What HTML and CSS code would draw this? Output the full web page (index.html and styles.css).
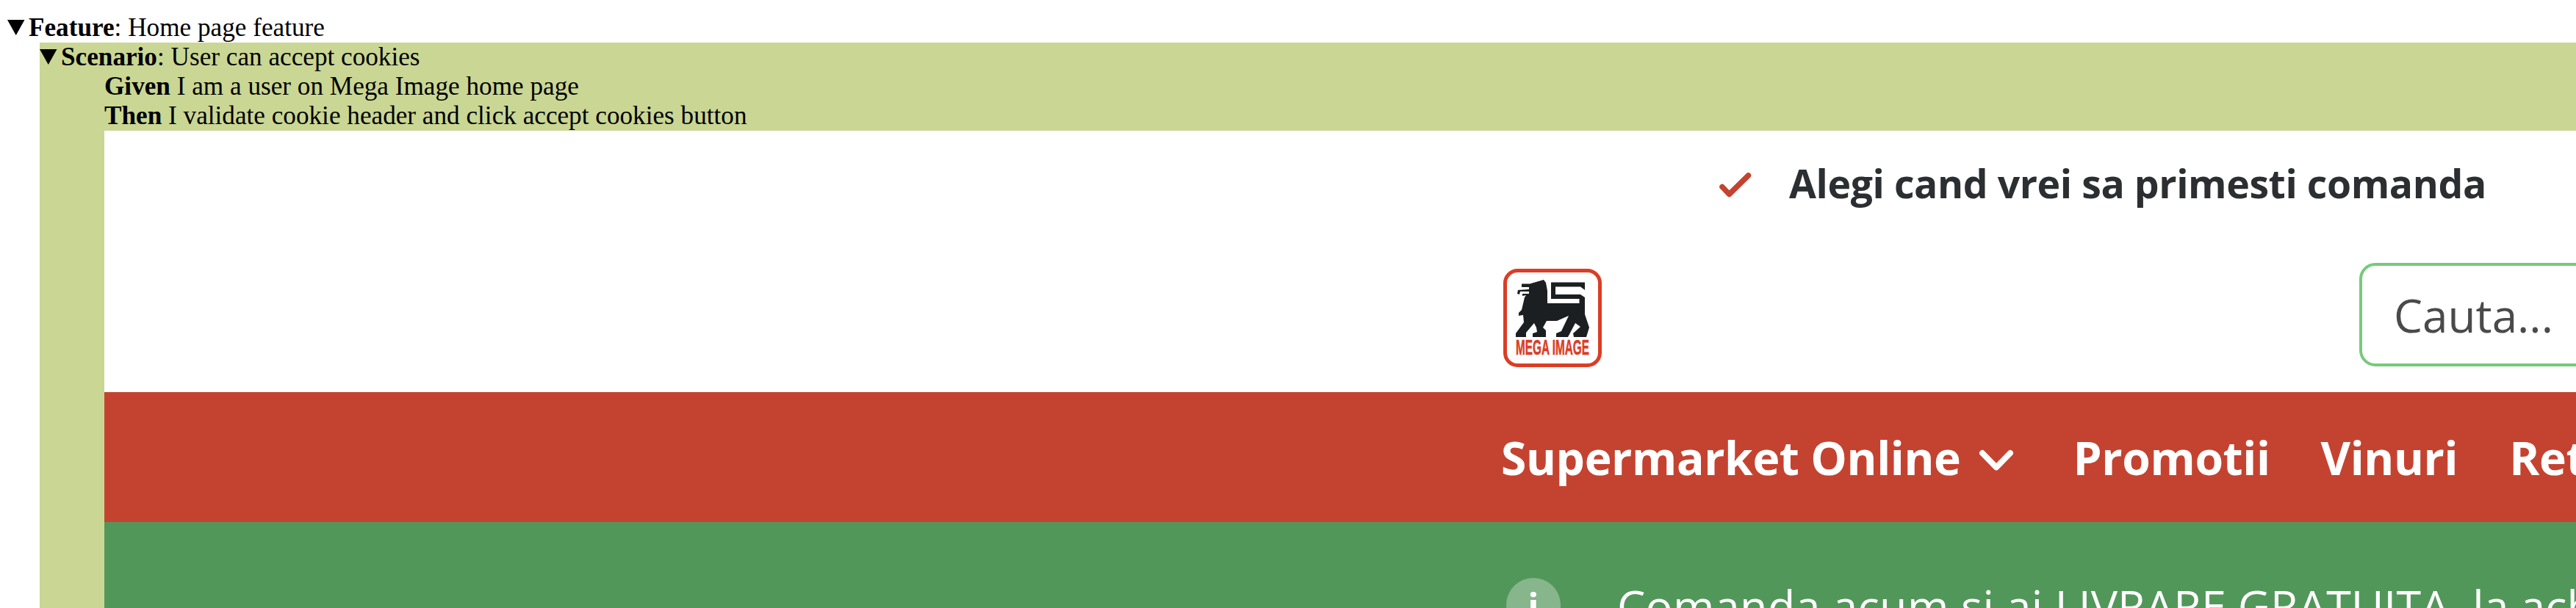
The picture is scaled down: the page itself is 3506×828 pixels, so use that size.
FILE: index.html
```html
<!DOCTYPE html>
<html lang="ro">
<head>
<meta charset="utf-8">
<title>Home page feature</title>
<link rel="stylesheet" href="styles.css">
</head>
<body>
<main class="report">
  <div class="summary feature"><svg class="marker" viewBox="0 0 24 22"><path d="M0 0H23.500L11.750 21Z"/></svg><span class="line"><b>Feature</b>: Home page feature</span></div>
  <section class="scenario">
    <div class="summary"><svg class="marker" viewBox="0 0 24 22"><path d="M0 0H23.500L11.750 21Z"/></svg><span class="line"><b>Scenario</b>: User can accept cookies</span></div>
    <div class="steps">
      <div class="step"><span class="line"><b>Given</b> I am a user on Mega Image home page</span></div>
      <div class="step"><span class="line"><b>Then</b> I validate cookie header and click accept cookies button</span></div>
      <div class="shot">
        <div class="usp">
          <svg class="check" viewBox="0 0 44 34"><path d="M4 19.500L13.500 29.500L39.500 4"/></svg>
          <span class="usp-text">Alegi cand vrei sa primesti comanda</span>
        </div>
        <div class="header">
          <svg class="logo" viewBox="0 0 134 134">
            <rect class="frame" x="2.500" y="2.500" width="129" height="129" rx="17"/>
            <path class="lion" d="M25 20.500H36L55 15L58 19L60 30V47H103.500V41H65V18.500H111V29L105 24.500H71V35H105L111 39V62L117 80L113 93H96L95 88L105 79L98 74L88 93H72V88L79 85L89 64L73 71H59L54 80L58 84V93H40V88L46 86L45 80L42 74L31 87V93H17V88L28 73L27 63L21 64V60L25 56L29 39L31 36L26 37V34L35 34V31L23 31L22 35L19 34L20 29L35 28V25H25Z"/>
            <text class="logo-text" x="17" y="117" textLength="100" lengthAdjust="spacingAndGlyphs">MEGA IMAGE</text>
          </svg>
          <div class="search">Cauta...</div>
        </div>
        <nav class="nav">
          <span class="nav-main">Supermarket Online</span>
          <svg class="chevron" viewBox="0 0 46 32"><path d="M4 5L23 24.500L42 5"/></svg>
          <span class="nav-promo">Promotii</span>
          <span class="nav-wine">Vinuri</span>
          <span class="nav-ret">Retete</span>
        </nav>
        <div class="notice">
          <span class="info">i</span>
          <span class="notice-text"><span class="lead">Comanda acum si ai </span>LIVRARE GRATUITA, la achizitii</span>
        </div>
      </div>
    </div>
  </section>
</main>
</body>
</html>
```
FILE: styles.css
```css
* { box-sizing: border-box; }
html, body { margin: 0; height: 828px; overflow: hidden; background: #fff; }
.report {
  height: 828px;
  padding-top: 18px;
  overflow: hidden;
  font: 35.2px/40px "Liberation Serif", "Times New Roman", serif;
  color: #000;
  white-space: nowrap;
}
.summary { display: flex; height: 40px; }
.feature { padding-left: 10px; }
.marker { width: 24px; height: 22px; margin: 9px 5px 0 0; flex: none; }
.scenario { margin-left: 54px; height: 770px; background: #cad694; }
.steps { margin-left: 88px; }
.step { height: 40px; }
.shot {
  height: 650px;
  overflow: hidden;
  background: #fff;
  font-family: "Open Sans", sans-serif;
}
.usp { display: flex; align-items: flex-start; height: 180px; padding-left: 2198px; }
.check { width: 44px; height: 34px; margin-top: 57px; flex: none; }
.check path { fill: none; stroke: #c44330; stroke-width: 7.5; stroke-linecap: round; stroke-linejoin: round; }
.usp-text { margin: 42px 0 0 51px; font-size: 53.5px; line-height: 60px; font-weight: 700; letter-spacing: -0.4px; color: #2b2f32; }
.header { display: flex; height: 176px; padding-left: 1904px; }
.logo { width: 134px; height: 134px; margin-top: 8px; flex: none; }
.frame { fill: #fff; stroke: #db3d26; stroke-width: 5; }
.lion { fill: #1c1f22; }
.logo-text { font: 700 30px "Liberation Sans", sans-serif; fill: #db3d26; stroke: #db3d26; stroke-width: 0.6; }
.search {
  width: 900px;
  height: 141px;
  margin-left: 1031px;
  padding: 27px 0 0 43px;
  flex: none;
  border: 4px solid #76ca7b;
  border-radius: 22px;
  font-size: 62px;
  line-height: 80px;
  color: #4a4a4a;
}
.nav {
  display: flex;
  height: 177px;
  padding: 49px 0 0 1901px;
  background: #c44330;
  color: #fff;
  font-size: 62.4px;
  line-height: 80px;
  font-weight: 700;
  letter-spacing: -0.4px;
}
.nav span { flex: none; }
.chevron { width: 46px; height: 32px; margin: 29px 0 0 25px; flex: none; }
.chevron path { fill: none; stroke: #fff; stroke-width: 8; stroke-linecap: round; stroke-linejoin: round; }
.nav-promo { margin-left: 82px; }
.nav-wine { margin-left: 69px; }
.nav-ret { margin-left: 70px; }
.notice { display: flex; height: 200px; padding-left: 1908px; background: #52975a; color: #fff; }
.info {
  width: 74px;
  height: 74px;
  margin-top: 76px;
  flex: none;
  border-radius: 50%;
  background: #87b58c;
  font-size: 50px;
  line-height: 76px;
  font-weight: 700;
  text-align: center;
}
.notice-text { margin: 74px 0 0 77px; flex: none; font-size: 61px; line-height: 80px; }
.lead { letter-spacing: 0.4px; }
```
